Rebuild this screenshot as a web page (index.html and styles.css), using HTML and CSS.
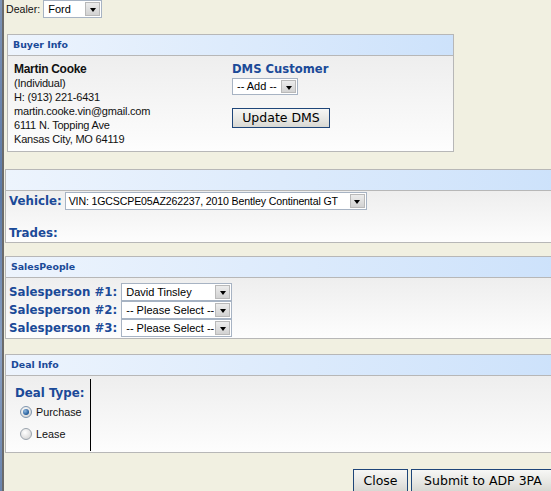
FILE: index.html
```html
<!DOCTYPE html>
<html>
<head>
<meta charset="utf-8">
<link rel="stylesheet" href="styles.css">
</head>
<body>
<div class="screen">
  <div class="desk"></div>
  <div class="page">
    <div class="dealer-row">
      <span class="txt">Dealer:</span>
      <span class="sel sel-dealer"><span class="val">Ford</span><span class="arr"></span></span>
    </div>

    <section class="panel panel-buyer">
      <div class="panel-head">Buyer Info</div>
      <div class="panel-body buyer-body">
        <div class="buyer-info">
          <div class="name">Martin Cooke</div>
          <div>(Individual)</div>
          <div>H: (913) 221-6431</div>
          <div>martin.cooke.vin@gmail.com</div>
          <div>6111 N. Topping Ave</div>
          <div>Kansas City, MO 64119</div>
        </div>
        <div class="dms">
          <div class="label dms-label">DMS Customer</div>
          <span class="sel sel-add"><span class="val">-- Add --</span><span class="arr"></span></span>
          <button class="btn btn-dms">Update DMS</button>
        </div>
      </div>
    </section>

    <section class="panel wide">
      <div class="panel-head"></div>
      <div class="panel-body vehicle-body">
        <div class="vehicle-row">
          <span class="label">Vehicle:</span>
          <span class="sel sel-vin"><span class="val">VIN: 1GCSCPE05AZ262237, 2010 Bentley Continental GT</span><span class="arr"></span></span>
        </div>
        <div class="label trades">Trades:</div>
      </div>
    </section>

    <section class="panel wide">
      <div class="panel-head">SalesPeople</div>
      <div class="panel-body sales-body">
        <span class="label">Salesperson #1:</span>
        <span class="sel sel-sp"><span class="val">David Tinsley</span><span class="arr"></span></span>
        <span class="label">Salesperson #2:</span>
        <span class="sel sel-sp"><span class="val">-- Please Select --</span><span class="arr"></span></span>
        <span class="label">Salesperson #3:</span>
        <span class="sel sel-sp"><span class="val">-- Please Select --</span><span class="arr"></span></span>
      </div>
    </section>

    <section class="panel wide panel-deal">
      <div class="panel-head">Deal Info</div>
      <div class="panel-body deal-body">
        <div class="deal-cell">
          <div class="label deal-label">Deal Type:</div>
          <div class="radio-row"><span class="radio checked"></span><span class="txt">Purchase</span></div>
          <div class="radio-row"><span class="radio"></span><span class="txt">Lease</span></div>
        </div>
      </div>
    </section>

    <div class="actions">
      <button class="btn btn-close">Close</button>
      <button class="btn btn-submit">Submit to ADP 3PA</button>
    </div>
  </div>
</div>
</body>
</html>
```

FILE: styles.css
```css
html, body {
  margin: 0;
  padding: 0;
  overflow: hidden;
  background: #f1f0e1;
}

.screen {
  display: flex;
  min-height: 100vh;
}

.desk {
  flex: none;
  width: 2px;
  background: linear-gradient(#7d93b6, #5c79a6 40%, #8aa0c2 70%, #6a84ad);
}

.page {
  flex: none;
  width: 552px;
  border-left: 2px solid #6b6b6b;
  background: #f1f0e1;
  font-family: "Liberation Sans", Arial, sans-serif;
  font-size: 11px;
  color: #111;
}

.txt {
  font-family: "Liberation Sans", Arial, sans-serif;
}

/* Dealer row */
.dealer-row {
  display: flex;
  align-items: center;
  height: 18px;
  padding-left: 2px;
  font-size: 10.6px;
}

.dealer-row .sel {
  margin-left: 3px;
}

/* fake selects */
.sel {
  display: inline-flex;
  box-sizing: border-box;
  height: 18px;
  border: 1px solid #a7b3c3;
  background: #fff;
  font-family: "Liberation Sans", Arial, sans-serif;
  font-size: 11px;
  color: #000;
  flex: none;
}

.sel .val {
  flex: 1;
  padding-left: 4px;
  line-height: 16px;
  white-space: nowrap;
  overflow: hidden;
}

.sel .arr {
  flex: none;
  box-sizing: border-box;
  width: 15px;
  margin: 1px;
  border: 1px solid #b9b9b9;
  background: linear-gradient(#ececec, #d2d2d2);
  display: flex;
  align-items: center;
  justify-content: center;
}

.sel .arr::after {
  content: "";
  margin-top: 2px;
  border-left: 3.5px solid transparent;
  border-right: 3.5px solid transparent;
  border-top: 4px solid #000;
}

.sel-dealer { width: 59px; }
.sel-add { width: 66px; height: 17px; margin-top: 2px; }
.sel-add .val { line-height: 15px; }
.sel-vin { width: 302px; margin-left: 3px; font-size: 10.6px; letter-spacing: -0.15px; }
.sel-vin .val { padding-left: 3px; }
.sel-sp { width: 111px; }

/* panels */
.panel {
  box-sizing: border-box;
  border: 1px solid #b7b7b7;
}

.panel-buyer {
  width: 447px;
  margin: 16px 0 0 3px;
}

.wide {
  margin: 17px 0 0 1px;
  border-right: none;
}

.wide + .wide {
  margin-top: 13px;
}

.wide + .panel-deal {
  margin-top: 15px;
}

.panel-head {
  height: 20px;
  line-height: 20px;
  padding-left: 5px;
  border-bottom: 1px solid #b7b7b7;
  background: linear-gradient(to right, #edf4fd, #cde2fb);
  font-family: "DejaVu Sans", Verdana, sans-serif;
  font-weight: bold;
  font-size: 9.4px;
  color: #1b4a98;
}

.panel-body {
  background: linear-gradient(#eeeeee, #fdfdfd);
}

.label {
  font-family: "DejaVu Sans", Verdana, sans-serif;
  font-weight: bold;
  font-size: 11.8px;
  color: #1b4a98;
}

/* Buyer */
.buyer-body {
  display: flex;
  padding: 6px 0 5px 6px;
}

.buyer-info {
  width: 218px;
  line-height: 14px;
  letter-spacing: -0.2px;
}

.buyer-info .name {
  font-weight: bold;
  font-size: 12px;
  letter-spacing: -0.3px;
  color: #111;
}

.dms {
  display: flex;
  flex-direction: column;
  align-items: flex-start;
}

.dms-label {
  font-size: 11.6px;
  line-height: 14px;
}

/* buttons */
.btn {
  box-sizing: border-box;
  height: 20px;
  padding: 0 8px;
  border: 1px solid #1f4679;
  border-radius: 0;
  background: linear-gradient(#f7f7f5, #e6e6e2 60%, #d8d8d3);
  font-family: "DejaVu Sans", Verdana, sans-serif;
  font-size: 12.5px;
  color: #000;
  line-height: 18px;
}

.btn-dms {
  width: 98px;
  margin-top: 13px;
}

/* Vehicle */
.vehicle-body {
  padding: 1px 0 1px 3px;
}

.vehicle-row {
  display: flex;
  align-items: center;
  height: 18px;
}

.trades {
  margin-top: 15px;
  line-height: 16px;
}

/* Sales */
.sales-body {
  display: grid;
  grid-template-columns: max-content max-content;
  column-gap: 4px;
  align-items: center;
  padding: 5px 0 1px 3px;
}

.sales-body .label {
  line-height: 18px;
}

/* Deal */
.deal-body {
  padding: 3px 0 1px 2px;
}

.deal-cell {
  box-sizing: border-box;
  width: 83px;
  height: 72px;
  padding: 6px 0 0 7px;
  border-right: 1px solid #000;
}

.deal-label {
  line-height: 16px;
}

.radio-row {
  display: flex;
  align-items: center;
  height: 22px;
  padding-left: 5px;
  font-size: 10.8px;
}

.radio-row:first-of-type {
  margin-top: 2px;
}

.radio {
  box-sizing: border-box;
  width: 12px;
  height: 12px;
  margin-right: 4px;
  border-radius: 50%;
  border: 1px solid #9aa3ad;
  background: radial-gradient(circle at 40% 35%, #ffffff, #dcdcdc 70%, #c9c9c9);
  display: flex;
  align-items: center;
  justify-content: center;
}

.radio.checked {
  border-color: #7f95ad;
}

.radio.checked::after {
  content: "";
  width: 6px;
  height: 6px;
  border-radius: 50%;
  background: radial-gradient(circle at 35% 35%, #8fb8e0, #1d5796 70%);
}

/* Actions */
.actions {
  display: flex;
  justify-content: flex-end;
  gap: 3px;
  margin-top: 16px;
  padding-right: 1px;
}

.actions .btn {
  height: 23px;
  line-height: 21px;
}

.btn-close { width: 55px; }
.btn-submit { width: 144px; }
```
